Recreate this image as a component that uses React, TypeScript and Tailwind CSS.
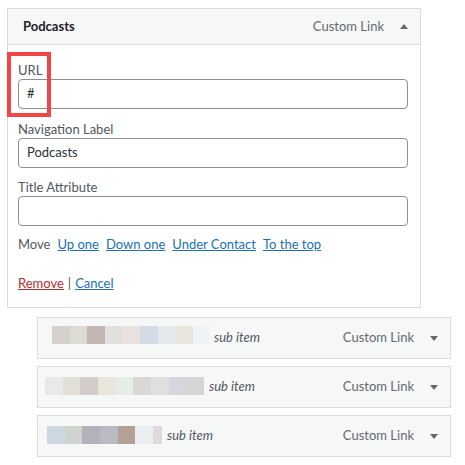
import React from "react";

const Tri = ({ up }: { up?: boolean }) => (
  <svg width="8" height="5" viewBox="0 0 8 5" className="block">
    {up ? <polygon points="0,5 8,5 4,0" fill="#646970" /> : <polygon points="0,0 8,0 4,5" fill="#646970" />}
  </svg>
);

const Field = ({ label, value, className }: { label: string; value: string; className?: string }) => (
  <div className={className}>
    <div className="h-[18px] leading-[18px] text-[#50575e]">{label}</div>
    <div className="h-[30px] border border-[#8c8f94] rounded-[4px] flex items-center pl-[8px] text-[#2c3338] bg-white">
      {value}
    </div>
  </div>
);

const blocks1 = ["#d6d1cd", "#dcdcd4", "#c2b6b2", "#e2dfdf", "#ebe2e0", "#d5dbe4", "#e5e9ec", "#e8e4de", "#eef3f6"];
const widths1 = [18, 17, 18, 17, 18, 18, 18, 17, 16];
const blocks2 = ["#e9e9eb", "#e3dfd9", "#d2cccc", "#e9e6de", "#e5ede9", "#dbd7d4", "#dfdfe0", "#d4d8de", "#d6d6d8"];
const widths2 = [18, 17, 18, 18, 17, 18, 18, 17, 18];
const blocks3 = ["#cbd8e2", "#d0d4cf", "#b5b1bb", "#babac3", "#b3a197", "#eceff2", "#ddd9dc"];
const widths3 = [18, 17, 18, 18, 17, 18, 9];

const SubItem = ({ colors, widths, pl, mt }: { colors: string[]; widths: number[]; pl: string; mt: string }) => (
  <div className={`h-[42px] border border-[#dcdcde] bg-[#f6f7f7] flex items-center pr-[12px] ${pl}`}>
    <div className={`flex h-[18px] ${mt}`}>
      {colors.map((c, i) => (
        <div key={i} className="h-[18px]" style={{ background: c, width: widths[i] }} />
      ))}
    </div>
    <span className="italic text-[#50575e] ml-[5px]">sub item</span>
    <span className="ml-auto text-[#646970]">Custom Link</span>
    <span className="ml-[16px]">
      <Tri />
    </span>
  </div>
);

export default function App() {
  return (
    <div
      className="relative w-[465px] h-[465px] bg-white text-[13px] overflow-hidden"
      style={{ fontFamily: "Lato, 'Open Sans', sans-serif" }}
    >
      <div className="ml-[7px] pt-[8px]">
        <div className="w-[414px] border border-[#dcdcde] bg-white">
          <div className="h-[36px] bg-[#f6f7f7] border-b border-[#dcdcde] flex items-center pl-[15px] pr-[12px]">
            <span className="font-bold text-[#1d2327]">Podcasts</span>
            <span className="ml-auto text-[#646970]">Custom Link</span>
            <span className="ml-[16px] mb-[1px]">
              <Tri up />
            </span>
          </div>
          <div className="pl-[10px] pr-[12px] pt-[16px] pb-[15px]">
            <Field label="URL" value="#" />
            <Field label="Navigation Label" value="Podcasts" className="mt-[11px]" />
            <Field label="Title Attribute" value="" className="mt-[10px]" />
            <div className="mt-[9px] h-[18px] leading-[18px] flex gap-[7px] text-[#50575e]">
              <span>Move</span>
              <a className="text-[#2271b1] underline">Up one</a>
              <a className="text-[#2271b1] underline">Down one</a>
              <a className="text-[#2271b1] underline">Under Contact</a>
              <a className="text-[#2271b1] underline">To the top</a>
            </div>
            <div className="mt-[21px] h-[18px] leading-[18px] text-[#50575e]">
              <a className="text-[#b32d2e] underline">Remove</a>
              <span className="mx-[4px]">|</span>
              <a className="text-[#2271b1] underline">Cancel</a>
            </div>
          </div>
        </div>
      </div>
      <div className="ml-[37px] mt-[9px] w-[414px] flex flex-col gap-[7px]">
        <SubItem colors={blocks1} widths={widths1} pl="pl-[14px]" mt="-mt-[6px]" />
        <SubItem colors={blocks2} widths={widths2} pl="pl-[7px]" mt="-mt-[3px]" />
        <SubItem colors={blocks3} widths={widths3} pl="pl-[9px]" mt="-mt-[2px]" />
      </div>
      <div className="absolute left-[7px] top-[52px] w-[44px] h-[65px] border-4 border-[#f44545]" />
    </div>
  );
}
